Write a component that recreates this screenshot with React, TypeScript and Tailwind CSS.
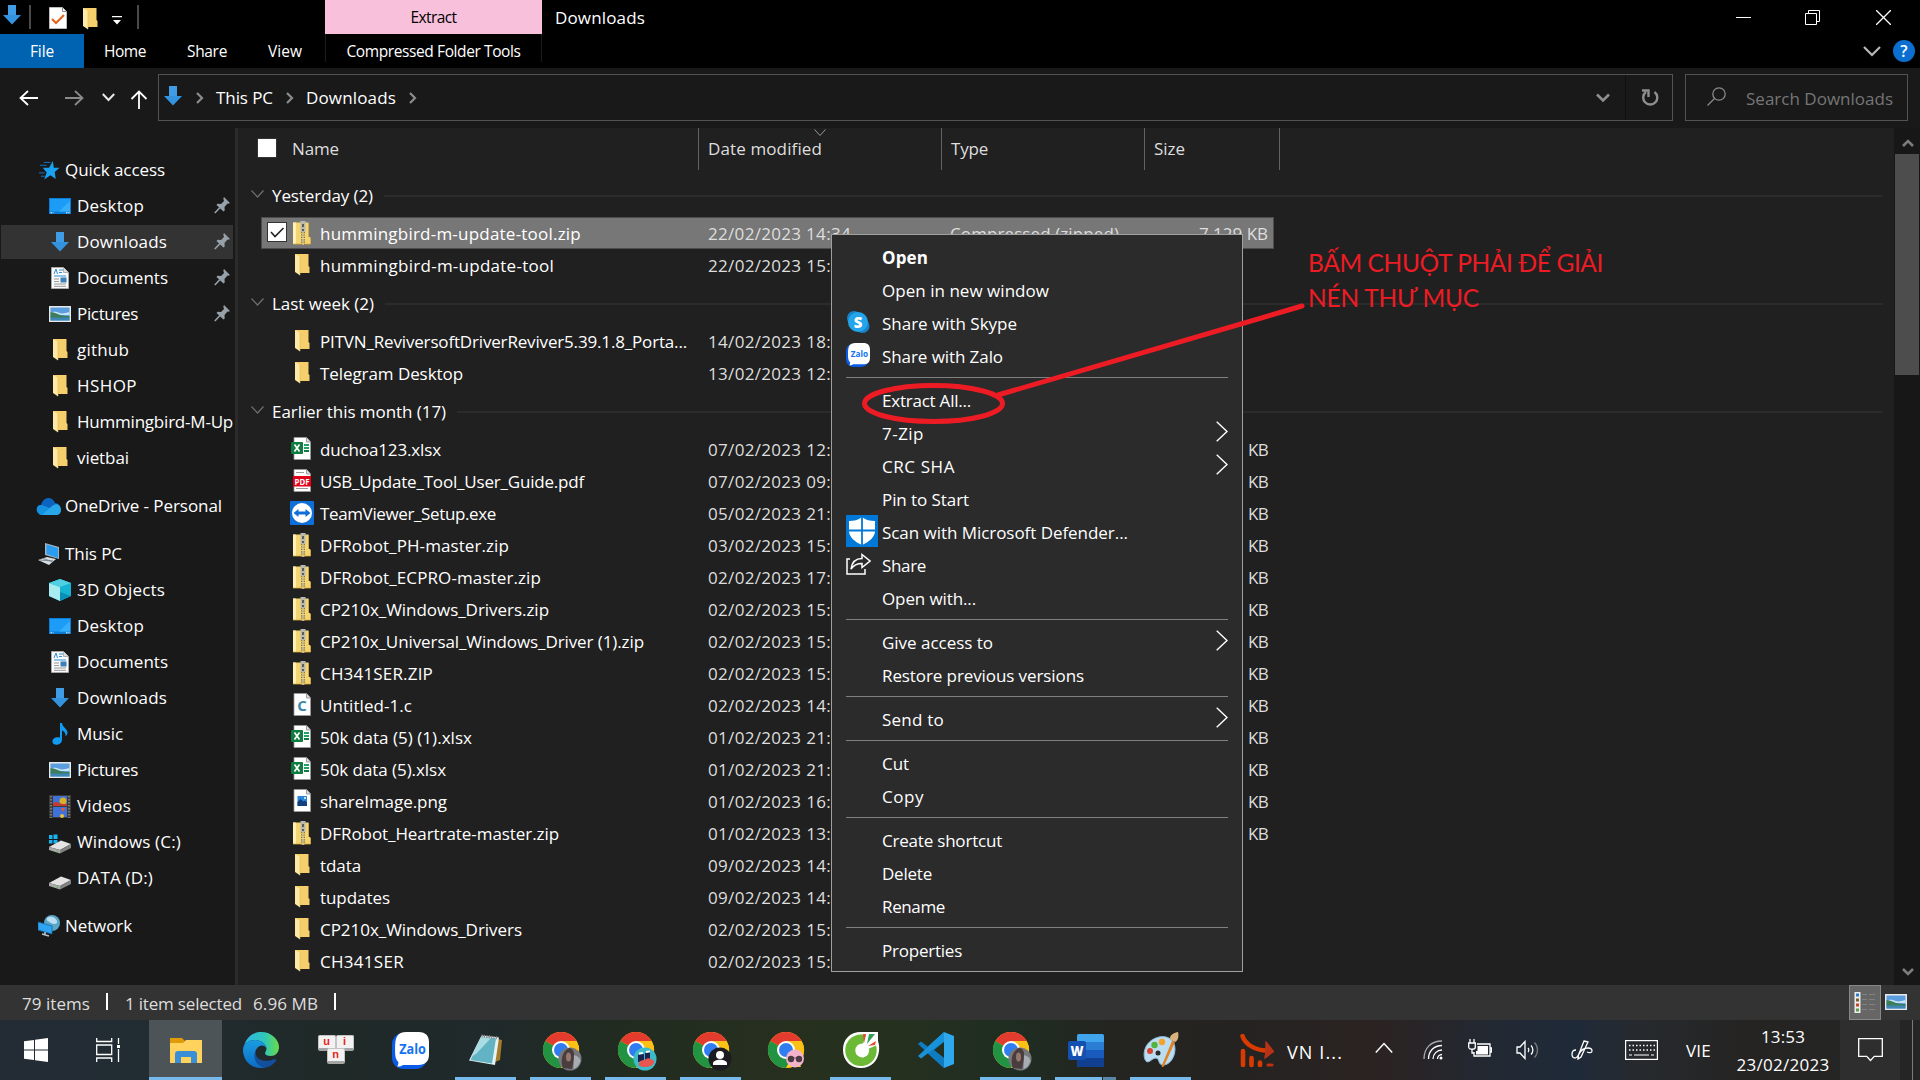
import { useLayoutEffect, useRef, useState, type ReactNode } from "react";

/* Text tracked so that it occupies a known width. */
function Fit({ w, children, className = "" }: { w: number; children: string; className?: string }) {
  const ref = useRef<HTMLSpanElement>(null);
  const [ls, setLs] = useState(0);
  useLayoutEffect(() => {
    const el = ref.current;
    if (el) setLs((w - el.getBoundingClientRect().width) / children.length);
  }, []);
  return (
    <span ref={ref} className={"inline-block shrink-0 whitespace-pre " + className} style={{ letterSpacing: ls }}>
      {children}
    </span>
  );
}

/* ---------- file icons ---------- */
const Folder = () => (
  <svg width="16" height="22" viewBox="0 0 16 22">
    <path d="M1 0h13.500v12l1 1v6H5z" fill="#f5cf6b" />
    <path d="M1 0l5 3v18.500L4 20l-3-2z" fill="#ffe9a6" />
    <path d="M6 3v18" stroke="#e3b84d" strokeWidth=".6" />
  </svg>
);
const Zip = () => (
  <svg width="20" height="24" viewBox="0 0 20 24">
    <path d="M1 1.500h15.500v14l2 1V23H1z" fill="#f5d571" />
    <path d="M1 1.500h3V23H1z" fill="#fff0b5" />
    <path d="M1 23h17.500v-6M16.500 2v14" stroke="#d9ad3c" strokeWidth=".8" fill="none" />
    <path d="M8.500 0h5v11h-5z" fill="#b9b9b3" />
    <path d="M10 3h2v3h-2zM10 8h2v2h-2z" fill="#5b5b58" />
    <path d="M11 11v13" stroke="#7d7452" strokeWidth="4" strokeDasharray="1.200 1.200" />
    <path d="M11 11v13" stroke="#e9e2c4" strokeWidth="1.200" strokeDasharray="1.200 1.200" />
  </svg>
);
const Page = ({ children }: { children?: ReactNode }) => (
  <svg width="20" height="23" viewBox="0 0 20 23" overflow="visible">
    <path d="M2 .5h12.500L18.500 5v17.500H2z" fill="#fff" stroke="#9a9a9a" strokeWidth=".8" />
    <path d="M14.500.5V5h4" fill="#ddd" stroke="#8a8a8a" strokeWidth=".8" />
    {children}
  </svg>
);
const Xlsx = () => (
  <Page>
    <path d="M12 7h5v2h-5zM12 10h5v2h-5z" fill="#21a366" />
    <path d="M12 13h5v2h-5z" fill="#107c41" />
    <rect x="-1" y="5" width="12" height="12" rx="1" fill="#107c41" />
    <path d="M2.500 7.500l5 7M7.500 7.500l-5 7" stroke="#fff" strokeWidth="1.700" />
  </Page>
);
const Pdf = () => (
  <Page>
    <path d="M4 3.500h8M4 19.500h12" stroke="#999" />
    <rect x="1" y="7" width="18" height="10.500" fill="#e2001a" />
    <text x="10" y="15.500" fontSize="8.500" fontWeight="700" fill="#fff" textAnchor="middle" fontFamily="Open Sans, sans-serif" textLength="15" lengthAdjust="spacingAndGlyphs">PDF</text>
  </Page>
);
const CFile = () => (
  <Page>
    <text x="10" y="17.500" fontSize="15" fontWeight="700" fill="#3f87a6" textAnchor="middle" fontFamily="Open Sans, sans-serif">C</text>
  </Page>
);
const Png = () => (
  <Page>
    <rect x="5.500" y="7" width="9.500" height="10" fill="#2b88d8" />
    <path d="M5.500 17v-4l3-3 3 2.500 1.500-1 2 2V17z" fill="#123f7d" />
    <circle cx="13" cy="9" r="1" fill="#fff" />
  </Page>
);
const TeamViewer = () => (
  <svg width="24" height="24" viewBox="0 0 24 24">
    <rect width="24" height="24" rx="1" fill="#0e6fd8" />
    <circle cx="12" cy="12" r="10" fill="#fff" />
    <path d="M3.500 12l5-4v2.500h7V8l5 4-5 4v-2.500h-7V16z" fill="#0e6fd8" />
  </svg>
);
const icons = { zip: Zip, folder: Folder, xlsx: Xlsx, pdf: Pdf, tv: TeamViewer, c: CFile, png: Png };

/* ---------- sidebar icons ---------- */
const DownArrow = ({ w = 18, h = 20 }: { w?: number; h?: number }) => (
  <svg width={w} height={h} viewBox="0 0 18 20" preserveAspectRatio="none">
    <path d="M5 0h8v10h5L9 19.500 0 10h5z" fill="#3393df" />
    <path d="M5 0h8v10H5z" fill="#4aa3ea" opacity=".6" />
  </svg>
);
const DesktopI = () => (
  <svg width="22" height="16" viewBox="0 0 22 16">
    <rect width="22" height="16" fill="#0c7dd6" />
    <rect x="1" y="1" width="20" height="12.500" fill="#1c9cf6" />
    <path d="M10 13.500L21 3v10.500z" fill="#37aefc" />
    <path d="M1.500 14.800h3M17 14.800h3.500" stroke="#fff" strokeDasharray="1.500 .8" />
  </svg>
);
const DocsI = () => (
  <svg width="18" height="22" viewBox="0 0 18 22">
    <path d="M.5.5h12l5 5v16H.5z" fill="#fafafa" stroke="#a8a8a8" />
    <path d="M12.500.5v5h5" fill="#ddd" stroke="#999" strokeWidth=".7" />
    <path d="M3 7l2-5 1.500 5M8 3h4M8 5.500h3M3 9h12" stroke="#2d8fd8" fill="none" />
    <path d="M3 12h5M3 14.500h5M3 17h12M3 19.300h12" stroke="#8d8d8d" strokeWidth=".9" />
    <rect x="9.500" y="10.500" width="6" height="5" fill="#3d7fb8" />
  </svg>
);
const PicsI = ({ w = 22, h = 16 }: { w?: number; h?: number }) => (
  <svg width={w} height={h} viewBox="0 0 22 16">
    <rect width="22" height="16" fill="#e8e8e8" />
    <rect x="1.500" y="1.500" width="19" height="13" fill="#5b9ee0" />
    <path d="M1.500 7c4-2 6-1 9 0s6 0 10-1v3h-19z" fill="#c7e3f5" />
    <path d="M1.500 6c4 0 8 3 12 3.500 3 .5 5 .5 7 .5v2h-19z" fill="#3d7d5c" />
    <path d="M1.500 11.500h19v3h-19z" fill="#3f86b5" />
  </svg>
);
const Star = () => (
  <svg className="ml-[2px]" width="21" height="21" viewBox="0 0 22 22">
    <path d="M14.500 1l1 7H21.500l-5 4.500L17.500 20 12 16l-6.500 4.500L8 13 4 8h6.500z" fill="#1ba1f2" />
    <path d="M5 2.500h7M1 5.500h7M0 13.500h6M2 17h4" stroke="#1478c8" strokeWidth="1" />
  </svg>
);
const Cloud = () => (
  <svg width="25" height="20" viewBox="0 0 25 20">
    <path d="M5 19C-1 17-.5 9 5 9 7 1 16-1 19 7c6 0 7 10 1 12z" fill="#0b64c0" />
    <path d="M5 19C-1 17-.5 8 6 9l10 4 4 6z" fill="#1490df" />
    <path d="M6 19l10-9c5-4 9-1 9 4 0 3-2 5-5 5z" fill="#28a8ea" />
  </svg>
);
const PcI = () => (
  <svg width="24" height="22" viewBox="0 0 24 22">
    <path d="M8 0l14 4v12L8 12z" fill="#9fb4c2" />
    <path d="M9.500 1.500L21 5v10L9.500 11z" fill="#2b9df0" />
    <path d="M1 17l9-3 9 2-7 6z" fill="#d8dde0" />
    <path d="M3 17l13 1M6 15.500l9 3" stroke="#68727a" strokeWidth=".8" />
  </svg>
);
const Cube = () => (
  <svg width="22" height="22" viewBox="0 0 22 22">
    <path d="M11 0l11 4v13l-11 5-11-5V4z" fill="#16b3d2" />
    <path d="M0 4l11 4v14L0 17z" fill="#a8ecf2" />
    <path d="M0 4l11-4 11 4-11 4z" fill="#4fd0e3" />
    <path d="M11 13l11 4-11 5z" fill="#0a8fb4" />
  </svg>
);
const MusicI = () => (
  <svg width="16" height="22" viewBox="0 0 16 22">
    <path d="M8 0h2c0 4 6 6 5.500 10-.3 2-1.500 3-2 3.500.5-3-1-5-3.500-6v9c0 6-9 7-9.500 2.500C0 15 4.500 13.500 8 14.500z" fill="#109af2" />
  </svg>
);
const VideoI = () => (
  <svg width="22" height="23" viewBox="0 0 22 23">
    <rect width="22" height="23" fill="#3a3a3a" />
    <rect x="4" y="1" width="14" height="10" fill="#3f71d8" />
    <rect x="4" y="12" width="14" height="10" fill="#3f71d8" />
    <circle cx="14" cy="6" r="3.500" fill="#d8b02a" />
    <path d="M4 9c3-5 5 1 14 0v2H4z" fill="#c23c30" />
    <path d="M12 13h4l-2 4z" fill="#e9552e" />
    <circle cx="13" cy="21" r="2" fill="#e3c43a" />
    <path d="M2 1v22M20 1v22" stroke="#888" strokeWidth="1.600" strokeDasharray="1.500 1.500" />
  </svg>
);
const Drive = ({ win }: { win?: boolean }) => (
  <svg className="mt-[3px]" width="22" height="20" viewBox="0 0 22 20">
    {win && <path d="M0 1h3.500v4H0zM4.500.500H8.500V5h-4zM0 6h3.500v3.500H0zM4.500 6h4v3.500h-4z" fill="#18b4f0" />}
    <path d="M0 13l12-6.500 10 3.500-11 6z" fill="#e3e3e3" />
    <path d="M0 13l11 3v3.500L0 16z" fill="#a9a9a9" />
    <path d="M11 16l11-6v4l-11 5.500z" fill="#828282" />
    <path d="M7.500 17l2 .5" stroke="#42d060" strokeWidth="1.200" />
  </svg>
);
const NetI = () => (
  <svg width="22" height="22" viewBox="0 0 22 22">
    <circle cx="14" cy="8" r="8" fill="#5aa6c9" />
    <path d="M9 3c4-3 9 0 10 3s-3 4-6 2-5-2-4-5z" fill="#b9dff0" />
    <path d="M0 7l14 4v8L0 15z" fill="#2fa4f3" stroke="#1769a8" strokeWidth=".8" />
    <path d="M4 19l7 2M7 17v3" stroke="#b5c0c7" strokeWidth="1.600" />
  </svg>
);
const Pin = () => (
  <svg width="16" height="17" viewBox="0 0 16 17">
    <path d="M10 0l6 6-1.500.8-1-.3-3 3.500.2 3.500-1.200 1L2.500 8l1-1.200 3.500.2 3-3L9.300 1.500z" fill="#97a1a9" />
    <path d="M6 10.500L.8 16" stroke="#97a1a9" strokeWidth="1.600" />
  </svg>
);

type Side = { t: string; w: number; i: ReactNode; top?: boolean; pin?: boolean; on?: boolean };
const side: Side[] = [
  { t: "Quick access", w: 100, i: <Star />, top: true },
  { t: "Desktop", w: 67, i: <DesktopI />, pin: true },
  { t: "Downloads", w: 90, i: <DownArrow />, pin: true, on: true },
  { t: "Documents", w: 91, i: <DocsI />, pin: true },
  { t: "Pictures", w: 61, i: <PicsI />, pin: true },
  { t: "github", w: 52, i: <Folder /> },
  { t: "HSHOP", w: 60, i: <Folder /> },
  { t: "Hummingbird-M-Up", w: 156, i: <Folder /> },
  { t: "vietbai", w: 52, i: <Folder /> },
  { t: "OneDrive - Personal", w: 157, i: <Cloud />, top: true },
  { t: "This PC", w: 57, i: <PcI />, top: true },
  { t: "3D Objects", w: 88, i: <Cube /> },
  { t: "Desktop", w: 67, i: <DesktopI /> },
  { t: "Documents", w: 91, i: <DocsI /> },
  { t: "Downloads", w: 90, i: <DownArrow /> },
  { t: "Music", w: 46, i: <MusicI /> },
  { t: "Pictures", w: 61, i: <PicsI /> },
  { t: "Videos", w: 54, i: <VideoI /> },
  { t: "Windows (C:)", w: 104, i: <Drive win /> },
  { t: "DATA (D:)", w: 76, i: <Drive /> },
  { t: "Network", w: 67, i: <NetI />, top: true },
];

/* ---------- file list ---------- */
type Row = [keyof typeof icons, string, number, string, boolean?];
const groups: { name: string; w: number; rows: Row[] }[] = [
  {
    name: "Yesterday (2)", w: 101,
    rows: [
      ["zip", "hummingbird-m-update-tool.zip", 261, "22/02/2023 14:34"],
      ["folder", "hummingbird-m-update-tool", 234, "22/02/2023 15:"],
    ],
  },
  {
    name: "Last week (2)", w: 102,
    rows: [
      ["folder", "PITVN_ReviversoftDriverReviver5.39.1.8_Porta...", 367, "14/02/2023 18:"],
      ["folder", "Telegram Desktop", 143, "13/02/2023 12:"],
    ],
  },
  {
    name: "Earlier this month (17)", w: 174,
    rows: [
      ["xlsx", "duchoa123.xlsx", 121, "07/02/2023 12:", true],
      ["pdf", "USB_Update_Tool_User_Guide.pdf", 264, "07/02/2023 09:", true],
      ["tv", "TeamViewer_Setup.exe", 176, "05/02/2023 21:", true],
      ["zip", "DFRobot_PH-master.zip", 189, "03/02/2023 15:", true],
      ["zip", "DFRobot_ECPRO-master.zip", 221, "02/02/2023 17:", true],
      ["zip", "CP210x_Windows_Drivers.zip", 229, "02/02/2023 15:", true],
      ["zip", "CP210x_Universal_Windows_Driver (1).zip", 324, "02/02/2023 15:", true],
      ["zip", "CH341SER.ZIP", 113, "02/02/2023 15:", true],
      ["c", "Untitled-1.c", 92, "02/02/2023 14:", true],
      ["xlsx", "50k data (5) (1).xlsx", 152, "01/02/2023 21:", true],
      ["xlsx", "50k data (5).xlsx", 126, "01/02/2023 21:", true],
      ["png", "shareImage.png", 127, "01/02/2023 16:", true],
      ["zip", "DFRobot_Heartrate-master.zip", 239, "01/02/2023 13:", true],
      ["folder", "tdata", 41, "09/02/2023 14:"],
      ["folder", "tupdates", 70, "09/02/2023 14:"],
      ["folder", "CP210x_Windows_Drivers", 202, "02/02/2023 15:"],
      ["folder", "CH341SER", 84, "02/02/2023 15:"],
    ],
  },
];

const FileRow = ({ r, selected }: { r: Row; selected?: boolean }) => {
  const Icon = icons[r[0]];
  return (
    <div className={"ml-[23px] flex h-8 w-[1013px] items-center border pl-[5px] " + (selected ? "border-[#4d4d4d] bg-[#777777]" : "border-transparent")}>
      <div className="w-[20px] shrink-0">
        {selected && (
          <svg width="20" height="20" viewBox="0 0 20 20" className="-mt-0.5">
            <rect x=".5" y=".5" width="19" height="19" fill="#fff" stroke="#333" />
            <path d="M4 10l4 4.500L16.500 6" fill="none" stroke="#222" strokeWidth="1.600" />
          </svg>
        )}
      </div>
      <div className="-mt-px ml-[2px] flex w-[26px] shrink-0 justify-center"><Icon /></div>
      <div className="ml-[5px] w-[388px] shrink-0 pt-[2px] text-white"><Fit w={r[2]}>{r[1]}</Fit></div>
      <div className="w-[242px] shrink-0 pt-[2px] text-[#dedede]"><Fit w={selected ? 143 : 123}>{r[3]}</Fit></div>
      <div className="w-[200px] shrink-0 pt-[2px] text-[#dedede]">{selected && <Fit w={169}>Compressed (zipped)</Fit>}</div>
      <div className="flex grow justify-end pr-[5px] pt-[2px] text-[#dedede]">
        {selected ? <Fit w={69}>7,129 KB</Fit> : r[4] ? <Fit w={20}>KB</Fit> : null}
      </div>
    </div>
  );
};

/* ---------- context menu ---------- */
const SkypeI = ({ size = 24 }: { size?: number }) => (
  <svg width={size} height={size} viewBox="0 0 24 24">
    <circle cx="8" cy="8" r="7" fill="#1583c9" />
    <circle cx="16.500" cy="16" r="7" fill="#1583c9" />
    <circle cx="12" cy="12" r="10" fill="#24a4ea" />
    <text x="12" y="17.500" fontSize="15" fontWeight="800" fill="#fff" textAnchor="middle" fontFamily="Open Sans, sans-serif">S</text>
  </svg>
);
const ZaloI = ({ size = 24 }: { size?: number }) => (
  <svg width={size} height={size} viewBox="0 0 36 36">
    <rect x="0" y="1" width="34" height="35" rx="11" fill="#0a5ce8" />
    <path d="M14 0h12c7 0 10 4 10 10v12c0 7-4 10-10 10H11c-2 1-4 2-6 1.500 1-1 1.500-3 1-4.500C3 26 3 22 3 16 3 5 5 0 14 0z" fill="#fff" />
    <text x="20" y="21" fontSize="13" fontWeight="700" fill="#1573ef" textAnchor="middle" fontFamily="Open Sans, sans-serif" textLength="26" lengthAdjust="spacingAndGlyphs">Zalo</text>
  </svg>
);
const Defender = () => (
  <svg width="32" height="32" viewBox="0 0 32 32">
    <rect width="32" height="32" fill="#0078d7" />
    <path d="M16 2c4 3 8 4 13 4v10c0 6-6 11-13 14C9 27 3 22 3 16V6c5 0 9-1 13-4z" fill="#fff" />
    <path d="M16 1v30M2 15.500h28" stroke="#0078d7" strokeWidth="1.800" />
  </svg>
);
const ShareI = () => (
  <svg width="25" height="22" viewBox="0 0 25 22" fill="none" stroke="#fff" strokeWidth="1.500">
    <path d="M4 6H1v15h18v-5" />
    <path d="M16 1.500l8 6.500-8 6.500v-4c-5 0-8 1-11 5.500C6 9 10 5.500 16 5.500z" />
  </svg>
);
type Item = { t: string; w: number; i?: ReactNode; sub?: boolean; bold?: boolean } | null;
const menu: Item[] = [
  { t: "Open", w: 46, bold: true },
  { t: "Open in new window", w: 167 },
  { t: "Share with Skype", w: 135, i: <SkypeI /> },
  { t: "Share with Zalo", w: 121, i: <ZaloI /> },
  null,
  { t: "Extract All...", w: 89 },
  { t: "7-Zip", w: 42, sub: true },
  { t: "CRC SHA", w: 73, sub: true },
  { t: "Pin to Start", w: 87 },
  { t: "Scan with Microsoft Defender...", w: 246, i: <Defender /> },
  { t: "Share", w: 44, i: <ShareI /> },
  { t: "Open with...", w: 94 },
  null,
  { t: "Give access to", w: 111, sub: true },
  { t: "Restore previous versions", w: 202 },
  null,
  { t: "Send to", w: 62, sub: true },
  null,
  { t: "Cut", w: 27 },
  { t: "Copy", w: 42 },
  null,
  { t: "Create shortcut", w: 120 },
  { t: "Delete", w: 50 },
  { t: "Rename", w: 63 },
  null,
  { t: "Properties", w: 80 },
];
const ContextMenu = () => (
  <div className="absolute left-[831px] top-[234px] h-[738px] w-[412px] border border-[#a0a0a0] bg-[#2b2b2b] py-[5px] pl-[14px] pr-[14px] text-white">
    {menu.map((m, k) =>
      m ? (
        <div key={k} className="flex h-[33px] items-center">
          <div className="-mt-px flex w-[36px] shrink-0">{m.i}</div>
          <Fit w={m.w} className={"pt-[2px] " + (m.bold ? "font-bold" : "")}>{m.t}</Fit>
          {m.sub && (
            <svg className="-mt-0.5 ml-auto" width="12" height="21" viewBox="0 0 12 21" fill="none" stroke="#fff" strokeWidth="1.400">
              <path d="M.7.7L11 10.500.7 20.300" />
            </svg>
          )}
        </div>
      ) : (
        <div key={k} className="h-[11px] pt-[5px]"><div className="h-px bg-[#808080]" /></div>
      )
    )}
  </div>
);

/* ---------- taskbar icons ---------- */
const Chrome = ({ badge }: { badge: ReactNode }) => (
  <svg width="40" height="40" viewBox="0 0 40 40" overflow="visible">
    <circle cx="20" cy="20" r="18" fill="#fbc116" />
    <path d="M20 20L4.400 11A18 18 0 0 1 35.600 11z" fill="#e33b2e" />
    <path d="M4.400 11A18 18 0 0 0 20 38l8-13.500-8-4.500z" fill="#229342" />
    <path d="M20 11h15.600A18 18 0 0 1 20 38l8-14z" fill="#fbc116" />
    <circle cx="20" cy="20" r="9" fill="#fff" />
    <circle cx="20" cy="20" r="7" fill="#2f7df0" />
    <g>{badge}</g>
  </svg>
);
const Photo = () => (
  <>
    <circle cx="29" cy="29" r="11.500" fill="#77787c" />
    <path d="M22 38c-3-7-1-17 6-20 4 0 6 5 5 11l-2 10z" fill="#4a3d3e" />
    <ellipse cx="27.500" cy="27" rx="2.500" ry="4.500" fill="#96776f" />
    <path d="M33 25c4 1 6 3 6.500 6-1 4-4 7-7 8z" fill="#a8adb3" />
  </>
);
const Robot = () => (
  <>
    <circle cx="29" cy="29" r="11.500" fill="#3cbcc8" />
    <path d="M22 25l6-1v7l-6 1zM29 23l5-1v7l-5 1z" fill="#1b2250" />
    <path d="M23 23.500l4-.7M30 22l4-.7" stroke="#fff" strokeWidth="1.800" />
    <path d="M23 33c2-4 5-2 7-4s7 0 8 2-2 6-8 6-8-1-7-4z" fill="#e8564f" />
  </>
);
const Person = () => (
  <>
    <circle cx="29" cy="29" r="11.500" fill="#1c1c20" />
    <circle cx="29" cy="25" r="4" fill="#fff" />
    <path d="M22 35v-1.500c0-5 14-5 14 0V35z" fill="#fff" />
  </>
);
const Glasses = () => (
  <>
    <path d="M21 37l3-7h8l3 7z" fill="#ffd400" />
    <circle cx="29" cy="28.500" r="9" fill="#f3b4cb" />
    <circle cx="25" cy="29" r="3.200" fill="#4d3b44" /><circle cx="33" cy="29" r="3.200" fill="#4d3b44" />
    <path d="M22 28h14" stroke="#4d3b44" strokeWidth=".8" />
  </>
);
const Explorer = () => (
  <svg width="32" height="27" viewBox="0 0 32 27">
    <path d="M0 1h12l3 3h17v5H0z" fill="#e09b0b" />
    <path d="M0 6h13l3-3h16v23H0z" fill="#ffd25e" />
    <path d="M5 26V17c0-2 1-3 3-3h16c2 0 3 1 3 3v9h-6v-6H11v6z" fill="#3a8fd6" />
  </svg>
);
const Edge = () => (
  <svg width="36" height="36" viewBox="0 0 36 36">
    <defs>
      <linearGradient id="eg" x1="0" x2="1"><stop stopColor="#2fb4ea" /><stop offset=".6" stopColor="#2fc7b8" /><stop offset="1" stopColor="#6bdc45" /></linearGradient>
      <linearGradient id="eb" x1="0" x2="0" y1="0" y2="1"><stop stopColor="#1b9de2" /><stop offset="1" stopColor="#0c6cc4" /></linearGradient>
    </defs>
    <path d="M1 14C4 3 12 0 18 0c11 0 18 8 18 15 0 6-4 9-8 9-4 0-6-1-6-3 0-1 1.500-2 1.500-4.500C23 12 18 8 12 8 6 8 2 11 1 14z" fill="url(#eg)" />
    <path d="M0 18c0-7 6-10 12-10 6 0 11 4 11.500 8-2-3-5-3-7-2-5 3-6 10-3 15 3 4 6 6 9 6.500C10 38 0 30 0 18z" fill="url(#eb)" />
    <path d="M13 18c-2 8 5 14 19 9l1.500 1c-3 5-8 7.500-12 7.500C13 35 9 24 13 18z" fill="#124f9c" />
  </svg>
);
const Key = ({ c }: { c: string }) => (
  <div className="flex h-[16px] w-[18px] justify-center rounded-[2px] border border-b-[3px] border-[#c4c4c4] border-b-[#a5a5a5] bg-[#f2f2f2] font-['Liberation_Sans',sans-serif] text-[11px] font-bold leading-[11px] text-[#ee2222]">{c}</div>
);
const Unikey = () => (
  <div className="flex w-[36px] shrink-0 flex-col items-center pb-px">
    <div className="flex w-full justify-between"><Key c="u" /><Key c="i" /></div>
    <div className="-mt-[3px]"><Key c="n" /></div>
  </div>
);
const Notepad = () => (
  <svg width="34" height="32" viewBox="0 0 34 32">
    <path d="M28 5l5 1-2 20-5 2z" fill="#a57b2b" />
    <path d="M12.500 1.500L30 3.500l-4 27.500L0 26.500z" fill="#e6f3f5" />
    <path d="M12.500 2.500L27 4.500l-4 25L1.500 26z" fill="#62b4c4" />
    <path d="M12.500 2.500L22 4 7 20l-5 3z" fill="#a9dde3" />
    <path d="M12.500 2l17 2" stroke="#8c8c8c" strokeWidth="3" strokeDasharray="1.200 1.200" />
  </svg>
);
const CocCoc = () => (
  <svg width="38" height="38" viewBox="0 0 38 38">
    <path d="M19 1h17v9c1 3 1.500 6 1 10-1 10-8 17-18 17S1 30 1 19 8 1 19 1z" fill="#fff" />
    <path d="M19 3.500c2 0 3.500.3 5 1l-3 8a7 7 0 1 0 6 5l7-3c3 10-4 20.500-15 20.500A15.500 15.500 0 0 1 19 3.500z" fill="#6cb936" />
    <circle cx="19" cy="20" r="4" fill="#fff" />
    <path d="M21 3l3 0-2 9z" fill="#e74b35" /><path d="M27 3h6l-8 10z" fill="#2f9e57" /><path d="M34 10l-1 4-7 1z" fill="#e74b35" />
  </svg>
);
const VsCode = () => (
  <svg width="36" height="36" viewBox="0 0 36 36">
    <path d="M26 0L6 18l20 18V26L16 18l10-8z" fill="#0d85cc" />
    <path d="M3 9.500L0 12l26 24V27z" fill="#0f7cc2" />
    <path d="M3 26.500L0 24 26 0v9z" fill="#1a92d9" />
    <path d="M26 0l10 4v28l-10 4z" fill="#2fa8ee" />
  </svg>
);
const Word = () => (
  <svg width="36" height="33" viewBox="0 0 36 33">
    <rect x="9" y="0" width="27" height="33" rx="2" fill="#185abd" />
    <path d="M9 2a2 2 0 0 1 2-2h23a2 2 0 0 1 2 2v6H9z" fill="#41a5ee" /><path d="M9 8h27v8H9z" fill="#2b7cd3" /><path d="M9 24h27v7a2 2 0 0 1-2 2H11a2 2 0 0 1-2-2z" fill="#103f91" />
    <rect x="0" y="7" width="18" height="19" rx="2" fill="#1450b0" />
    <text x="9" y="21.500" fontSize="14" fontWeight="800" fill="#fff" textAnchor="middle" fontFamily="Open Sans, sans-serif" textLength="13" lengthAdjust="spacingAndGlyphs">W</text>
  </svg>
);
const Paint = () => (
  <svg width="36" height="36" viewBox="0 0 36 36">
    <path d="M16 5c10-2 16 4 16 12s-5 16-12 16c-5 0-3-6-7-7-4 0-5 4-9 4C-1 27-1 9 16 5z" fill="#bcdcf0" stroke="#8bb8d8" />
    <circle cx="7" cy="19" r="3" fill="#d9432f" /><circle cx="11.500" cy="13" r="3.200" fill="#52b43e" /><circle cx="19" cy="10" r="3.200" fill="#f3a32c" /><circle cx="15" cy="21" r="2.500" fill="#2a2a2a" />
    <path d="M29 9l3 1-11 24c-1 2-3 1-2-1z" fill="#de8426" />
    <path d="M28 8c-3-3 1-7 7-8 1 4 0 9-3 10z" fill="#d9b27c" />
  </svg>
);

const apps: { i: ReactNode; bar?: boolean; on?: boolean; word?: boolean }[] = [
  { i: <Explorer />, on: true },
  { i: <Edge /> },
  { i: <Unikey /> },
  { i: <ZaloI size={37} /> },
  { i: <Notepad />, bar: true },
  { i: <Chrome badge={<Photo />} />, bar: true },
  { i: <Chrome badge={<Robot />} />, bar: true },
  { i: <Chrome badge={<Person />} />, bar: true },
  { i: <Chrome badge={<Glasses />} /> },
  { i: <CocCoc />, bar: true },
  { i: <VsCode /> },
  { i: <Chrome badge={<Photo />} />, bar: true },
  { i: <Word />, word: true },
  { i: <Paint />, bar: true },
];

const Crumb = () => (
  <svg width="8" height="12" viewBox="0 0 8 12" fill="none" stroke="#8c8c8c" strokeWidth="2.200"><path d="M1 1l5 5-5 5" /></svg>
);
const Sep = () => <div className="h-6 w-[2px] bg-[#4a4a4a]" />;

const Taskbar = () => (
  <div className="flex h-[60px] bg-[linear-gradient(90deg,#232c35_0,#222c33_150px,#1f2927_330px,#20292b_480px,#212b20_620px,#27301f_800px,#25301f_900px,#1f2d22_1010px,#242420_1120px,#252321_1250px,#2b2322_1380px,#232831_1480px,#1f2a39_1570px,#262a2e_1640px,#252423_1740px,#252525_1920px)] text-white">
    <div className="flex w-[72px] items-center justify-center">
      <svg width="24" height="24" viewBox="0 0 24 24" fill="#fff"><path d="M0 3.300l10-1.400v9.600H0zM11 1.700L24 0v11.500H11zM0 12.500h10v9.600L0 20.700zM11 12.500h13V24l-13-1.800z" /></svg>
    </div>
    <div className="mr-[4px] flex w-[72px] items-center justify-center">
      <svg width="25" height="24" viewBox="0 0 25 24" fill="none" stroke="#fff" strokeWidth="1.300">
        <path d="M.7 0v3.500h15V0M.7 24v-4h15v4M.7 7h15v9.500H.7zM22.500 0v6M22.500 11v13" /><path d="M21 7h3v3h-3z" fill="#fff" stroke="none" />
      </svg>
    </div>
    {apps.map((a, k) => (
      <div key={k} className="flex w-[75px] flex-col items-center">
        <div className={"flex h-[57px] w-[73px] items-center justify-center pt-[3px] " + (a.on ? "bg-[#4c5458]" : "")}>{a.i}</div>
        {a.on && <div className="h-[3px] w-[73px] bg-[#76b9ed]" />}
        {a.bar && <div className="h-[3px] w-[61px] bg-[#76b9ed]" />}
        {a.word && <div className="flex h-[3px] w-[61px]"><div className="w-[47px] bg-[#76b9ed]" /><div className="ml-px grow bg-[#5a86a8]" /></div>}
      </div>
    ))}
    <div className="flex grow items-center">
      <svg className="ml-[42px]" width="34" height="33" viewBox="0 0 34 33">
        <path d="M2.500 2c3 9 13 14 23 14.500" fill="none" stroke="#d83b01" strokeWidth="4.500" strokeLinecap="round" />
        <path d="M26 8l7.500 9.500L25 24l1-5z" fill="#b83218" stroke="#b83218" strokeWidth="1.500" strokeLinejoin="round" />
        <path d="M3 17v14M11.500 24v7M20 28.500v2.500M29 31.500" stroke="#d83b01" strokeWidth="4.600" strokeLinecap="round" />
        <path d="M28 31h4" stroke="#c42f10" strokeWidth="3" strokeLinecap="round" />
      </svg>
      <div className="ml-[13px] w-[88px] pt-1 text-[18px]"><Fit w={56}>VN I...</Fit></div>
      <svg className="-mt-1" width="18" height="12" viewBox="0 0 18 12" fill="none" stroke="#fff" strokeWidth="1.500"><path d="M.8 10.500L9 1.500l8.200 9" /></svg>
      <svg className="ml-[30px]" width="20" height="20" viewBox="0 0 20 20" fill="none" stroke="#fff" strokeWidth="1.300">
        <path d="M1 19C1 8 8 1 19 1" stroke="#aaa" /><path d="M5.500 19C5.500 11 11 5.500 19 5.500M10 19c0-5 4-9 9-9M14.500 19c0-2.500 2-4.500 4.500-4.500" /><circle cx="18" cy="18" r="1.500" fill="#fff" stroke="none" />
      </svg>
      <svg className="-mt-1 ml-[25px]" width="24" height="18" viewBox="0 0 24 18" fill="none" stroke="#fff" strokeWidth="1.300">
        <path d="M9 5h13v12H6v-4M22 9h1.500v4H22" /><path d="M9.500 7h10.500v8.500H8V12h1.500z" fill="#fff" stroke="none" />
        <path d="M2 0v4M6 0v4M.7 4h6.600v4c0 3-6.600 3-6.600 0zM4 10v4h2" />
      </svg>
      <svg className="ml-[24px]" width="24" height="20" viewBox="0 0 24 20" fill="none" stroke="#fff" strokeWidth="1.300">
        <path d="M1 7v6h3l5 5.500v-17L4 7z" /><path d="M12 8c1 1 1 3 0 4M15 5.500c2.500 2.500 2.500 6.500 0 9" /><path d="M18.500 2.500c4 4 4 11 0 15" stroke="#777" />
      </svg>
      <svg className="ml-[31px]" width="22" height="20" viewBox="0 0 22 20" fill="none" stroke="#fff" strokeWidth="1.300">
        <path d="M13 1l4 1-7 15-3 2 .5-4zM5 10c-3 0-4 2-4 4s1 4 3 4 3-2 4-4c2-4 4-6 9-6 3 0 4 1 4 3s-3 2-5 1" />
      </svg>
      <svg className="ml-[32px]" width="33" height="20" viewBox="0 0 33 20" fill="none" stroke="#fff" strokeWidth="1.200">
        <rect x=".6" y=".6" width="31.800" height="18.800" /><path d="M4 5.500h26M4 10h26" strokeDasharray="1.500 2" strokeWidth="1.600" /><path d="M4 15h3M9 15h15M26 15h3" />
      </svg>
      <div className="ml-[28px] w-[50px] pt-[2px] text-[17px]"><Fit w={25}>VIE</Fit></div>
      <div className="flex w-[94px] flex-col items-center gap-[3px] text-[17px] leading-[25px]"><Fit w={44}>13:53</Fit><Fit w={93}>23/02/2023</Fit></div>
      <div className="ml-[10px] flex h-full w-[60px] items-center justify-center bg-[#2f2e2e]">
        <svg width="25" height="24" viewBox="0 0 25 24" fill="none" stroke="#fff" strokeWidth="1.300"><path d="M.7.7h23.600v17.600h-8L12.500 22.500 8.700 18.300h-8z" /></svg>
      </div>
      <div className="ml-[12px] h-full w-px bg-[#7a7a7a]" />
    </div>
  </div>
);

export default function App() {
  return (
    <div className="relative flex h-[1080px] w-[1920px] flex-col overflow-hidden bg-[#191919] font-['Open_Sans','Noto_Sans',sans-serif] text-[17px] leading-6 text-white">
      {/* title bar and ribbon */}
      <div className="flex h-[68px] bg-black text-[15.500px]">
        <div className="w-[325px]">
          <div className="flex h-[34px] items-center">
            <div className="-mt-1 ml-[3px] w-[26px]"><DownArrow /></div>
            <div className="w-[20px]"><Sep /></div>
            <svg className="mt-[2px]" width="18" height="22" viewBox="0 0 18 22"><path d="M.5.500h13l4 4v17H.5z" fill="#fff" stroke="#bbb" /><path d="M13.500.5v4h4" fill="none" stroke="#888" /><path d="M3 12l4 4 8-8" fill="none" stroke="#e8641b" strokeWidth="2.200" /></svg>
            <div className="ml-[15px] mt-[3px] w-[30px]"><Folder /></div>
            <svg className="mt-[6px]" width="10" height="10" viewBox="0 0 10 10" fill="#fff"><path d="M0 1h10v1.300H0zM1 5h8L5 9.500z" /></svg>
            <div className="ml-[15px]"><Sep /></div>
          </div>
          <div className="flex h-[34px] items-center">
            <div className="flex h-full w-[84px] items-center justify-center bg-[#0063b1]"><Fit w={24}>File</Fit></div>
            <div className="ml-[20px] w-[83px]"><Fit w={42}>Home</Fit></div>
            <div className="w-[81px]"><Fit w={40}>Share</Fit></div>
            <Fit w={34}>View</Fit>
          </div>
        </div>
        <div className="w-[217px]">
          <div className="flex h-[34px] items-center justify-center bg-[#f9c0dc] text-black"><Fit w={46}>Extract</Fit></div>
          <div className="flex h-[28px] items-center justify-center border-x border-[#1c1c1c] pt-[6px]"><Fit w={174}>Compressed Folder Tools</Fit></div>
        </div>
        <div className="ml-[13px] h-[34px] pt-[6px] text-[17px]"><Fit w={90}>Downloads</Fit></div>
        <div className="ml-auto flex w-[190px] flex-col">
          <div className="flex h-[34px] items-center pl-[6px]">
            <div className="h-px w-[15px] bg-white" />
            <svg className="ml-[54px]" width="15" height="15" viewBox="0 0 15 15" fill="none" stroke="#fff"><path d="M.5 3.500h11v11H.5zM3.500 3.500v-3h11v11h-3" /></svg>
            <svg className="ml-[56px]" width="15" height="15" viewBox="0 0 15 15" stroke="#fff" strokeWidth="1.300"><path d="M0 0l15 15M15 0L0 15" /></svg>
          </div>
          <div className="flex h-[34px] items-center pl-[133px]">
            <svg width="18" height="11" viewBox="0 0 18 11" fill="none" stroke="#b8b8b8" strokeWidth="2.200"><path d="M1 1l8 8 8-8" /></svg>
            <div className="ml-[12px] flex size-[22px] items-center justify-center rounded-full bg-[#0a6fd0] text-[16px] font-semibold">?</div>
          </div>
        </div>
      </div>

      {/* address bar */}
      <div className="flex h-[60px] items-start pt-[6px]">
        <div className="flex h-[47px] w-[158px] items-center pl-[19px]">
          <svg width="19" height="16" viewBox="0 0 19 16" fill="none" stroke="#fff" strokeWidth="1.800"><path d="M19 8H1.500M9 1L1.500 8 9 15" /></svg>
          <svg className="ml-[27px]" width="19" height="16" viewBox="0 0 19 16" fill="none" stroke="#8a8a8a" strokeWidth="1.800"><path d="M0 8h17.500M10 1l7.500 7-7.500 7" /></svg>
          <svg className="ml-[18px]" width="13" height="9" viewBox="0 0 13 9" fill="none" stroke="#e8e8e8" strokeWidth="2"><path d="M.8 1l5.700 6L12.200 1" /></svg>
          <svg className="ml-[15px] mt-[4px] shrink-0" width="18" height="19" viewBox="0 0 18 19" fill="none" stroke="#fff" strokeWidth="1.800"><path d="M9 19V1.500M1.500 9L9 1.500 16.500 9" /></svg>
        </div>
        <div className="flex h-[47px] w-[1515px] items-center border border-[#535353]">
          <div className="-mt-[3px] ml-[5px] w-[32px]"><DownArrow /></div>
          <div className="w-[20px]"><Crumb /></div>
          <Fit w={57}>This PC</Fit>
          <div className="ml-[13px] w-[20px]"><Crumb /></div>
          <Fit w={90}>Downloads</Fit>
          <div className="ml-[13px]"><Crumb /></div>
          <svg className="ml-auto" width="14" height="10" viewBox="0 0 14 10" fill="none" stroke="#8f8f8f" strokeWidth="2.600"><path d="M1 1.500l6 6 6-6" /></svg>
          <div className="ml-[15px] h-full w-px bg-[#101010]" />
          <svg className="ml-[16px] mr-[13px]" width="17" height="17" viewBox="0 0 17 17" fill="none" stroke="#8f8f8f" strokeWidth="2.400"><path d="M12.500 3A7 7 0 1 1 4 3M0 1.500h6.500V8" /></svg>
        </div>
        <div className="ml-[12px] flex h-[47px] w-[223px] items-center border border-[#535353] pl-[21px] text-[#767676]">
          <svg className="-mt-[3px] mr-[20px]" width="19" height="19" viewBox="0 0 19 19" fill="none" stroke="#8a8a8a" strokeWidth="1.300"><circle cx="12" cy="7" r="6.200" /><path d="M7.500 11.500L.5 18.500" /></svg>
          <div className="pt-[2px]"><Fit w={147}>Search Downloads</Fit></div>
        </div>
      </div>

      {/* panes */}
      <div className="flex h-[857px]">
        <div className="w-[235px] overflow-hidden pt-[25px]">
          {side.map((s, k) => (
            <div key={k} className={"pl-px " + (s.top && k > 0 ? "pt-3" : "")}>
              <div className={"mb-[2px] flex h-[34px] w-[232px] items-center " + (s.on ? "bg-[#333333]" : "")}>
                <div className={"flex shrink-0 items-center justify-center " + (s.top ? "ml-[34px] w-[27px]" : "ml-[44px] w-[30px]")}>{s.i}</div>
                <div className={s.top ? "ml-[3px]" : "ml-[2px]"}><Fit w={s.w}>{s.t}</Fit></div>
                {s.pin && <div className="-mt-px ml-auto mr-[3px] shrink-0"><Pin /></div>}
              </div>
            </div>
          ))}
        </div>
        <div className="w-[3px] bg-[#2b2b2b]" />
        <div className="w-[1656px] overflow-hidden bg-[#202020]">
          <div className="flex h-[45px] items-start text-[#dedede]">
            <div className="flex h-[42px] w-[461px] items-center border-r border-[#636363] pl-[19px]">
              <div className="-mt-[3px] size-[20px] border border-[#333] bg-white" />
              <div className="ml-[15px]"><Fit w={47}>Name</Fit></div>
            </div>
            <div className="relative flex h-[42px] w-[243px] items-center border-r border-[#636363] pl-[9px]">
              <Fit w={114}>Date modified</Fit>
              <svg className="absolute left-[115px] top-px" width="12" height="8" viewBox="0 0 12 8" fill="none" stroke="#9a9a9a"><path d="M.5.5L6 6.500 11.500.5" /></svg>
            </div>
            <div className="flex h-[42px] w-[203px] items-center border-r border-[#636363] pl-[9px]"><Fit w={37}>Type</Fit></div>
            <div className="flex h-[42px] w-[135px] items-center border-r border-[#636363] pl-[9px]"><Fit w={31}>Size</Fit></div>
          </div>
          {groups.map((g) => (
            <div key={g.name}>
              <div className="flex h-[44px] items-center pt-[2px]">
                <svg className="-mt-[5px] ml-[13px] mr-[8px]" width="13" height="8" viewBox="0 0 13 8" fill="none" stroke="#6f6f6f" strokeWidth="1.200"><path d="M.5.5l6 6.500 6-6.500" /></svg>
                <Fit w={g.w}>{g.name}</Fit>
                <div className="ml-[11px] mr-[11px] h-[2px] grow bg-[#2b2b2b]" />
              </div>
              {g.rows.map((r) => <FileRow key={r[1]} r={r} selected={r[1] === "hummingbird-m-update-tool.zip"} />)}
            </div>
          ))}
        </div>
        <div className="flex grow flex-col items-center bg-[#171717]">
          <svg className="mt-[10px] ml-px" width="12" height="10" viewBox="0 0 12 10" fill="none" stroke="#7c7c7c" strokeWidth="2.600"><path d="M1 8l5-5 5 5" /></svg>
          <div className="mt-[6px] h-[221px] w-[24px] bg-[#4d4d4d]" />
          <svg className="mb-[8px] ml-px mt-auto" width="12" height="10" viewBox="0 0 12 10" fill="none" stroke="#7c7c7c" strokeWidth="2.600"><path d="M1 2l5 5 5-5" /></svg>
        </div>
      </div>

      {/* status bar */}
      <div className="flex h-[35px] items-center bg-[#333333] text-[#dedede]">
        <div className="ml-[22px] w-[84px] pt-[2px]"><Fit w={68}>79 items</Fit></div>
        <div className="-mt-[2px] h-[17px] w-[2px] bg-white" />
        <div className="ml-[17px] w-[128px] pt-[2px]"><Fit w={117}>1 item selected</Fit></div>
        <div className="w-[81px] pt-[2px]"><Fit w={65}>6.96 MB</Fit></div>
        <div className="-mt-[2px] h-[17px] w-[2px] bg-white" />
        <div className="ml-auto flex h-[35px] w-[32px] items-center justify-center border border-[#888] bg-[#666]">
          <svg width="22" height="21" viewBox="0 0 22 21"><path d="M.5 0h6v21h-6z" fill="#eee" /><path d="M2 1.500h3v3H2z" fill="#2d7cc4" /><path d="M2 6.500h3v3H2z" fill="#77622e" /><path d="M2 11.500h3v3H2z" fill="#c4472d" /><path d="M2 16.500h3v3H2z" fill="#5c9c48" /><path d="M8 2.500h5M15 2.500h6M8 7.500h5M15 7.500h6M8 12.500h5M15 12.500h6M8 17.500h5M15 17.500h6" stroke="#828282" /></svg>
        </div>
        <div className="-mt-[2px] ml-[4px] mr-[13px]"><PicsI /></div>
      </div>

      <Taskbar />

      <ContextMenu />

      {/* annotation */}
      <svg className="absolute left-[850px] top-[290px]" width="470" height="145" viewBox="850 290 470 145" fill="none" stroke="#ed1c24" strokeWidth="5">
        <ellipse cx="933.500" cy="403.500" rx="69" ry="18" />
        <path d="M998 395L1302 306" strokeLinecap="round" />
      </svg>
      <div className="absolute left-[1308px] top-[245px] flex flex-col font-['Lato','Open_Sans',sans-serif] text-[24.500px] leading-[35px] text-[#ed1c24]">
        <div><Fit w={295}>BẤM CHUỘT PHẢI ĐỂ GIẢI</Fit></div>
        <div><Fit w={171}>NÉN THƯ MỤC</Fit></div>
      </div>
    </div>
  );
}
